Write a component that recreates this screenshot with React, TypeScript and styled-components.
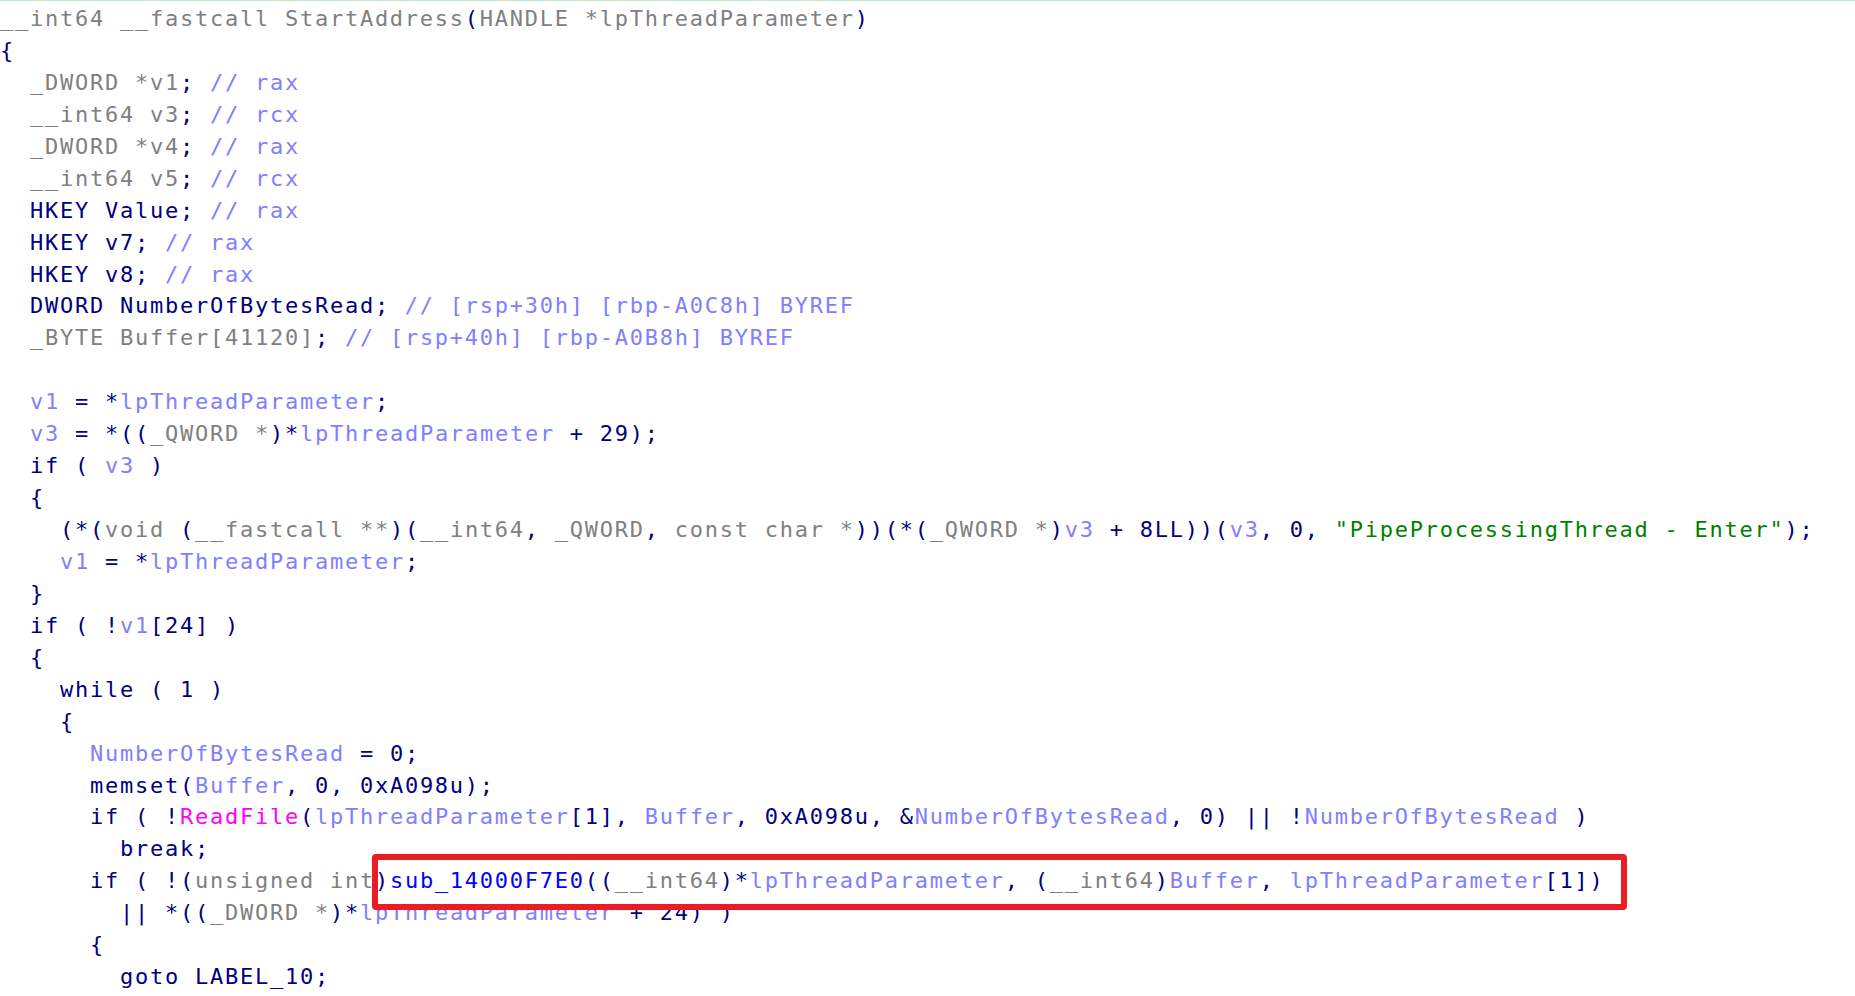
import React from "react";
import styled, { createGlobalStyle } from "styled-components";

type Kind = "n" | "g" | "v" | "s" | "m" | "f";

const colors: Record<Kind, string> = {
  n: "#000080", // keywords, punctuation, numbers
  g: "#808080", // types
  v: "#8080ff", // variables and comments
  s: "#008000", // strings
  m: "#ff00ff", // imports
  f: "#0000ff", // functions
};

// each line: segments split by "§", first char of a segment is its kind
const source: string[] = [
  "g__int64 __fastcall StartAddress§n(§gHANDLE *lpThreadParameter§n)",
  "n{",
  "g  _DWORD *v1§n;§v // rax",
  "g  __int64 v3§n;§v // rcx",
  "g  _DWORD *v4§n;§v // rax",
  "g  __int64 v5§n;§v // rcx",
  "n  HKEY Value;§v // rax",
  "n  HKEY v7;§v // rax",
  "n  HKEY v8;§v // rax",
  "n  DWORD NumberOfBytesRead;§v // [rsp+30h] [rbp-A0C8h] BYREF",
  "g  _BYTE Buffer[41120]§n;§v // [rsp+40h] [rbp-A0B8h] BYREF",
  "n ",
  "n  §vv1§n = *§vlpThreadParameter§n;",
  "n  §vv3§n = *((§g_QWORD *§n)*§vlpThreadParameter§n + 29);",
  "n  if ( §vv3§n )",
  "n  {",
  'n    (*(§gvoid §n(§g__fastcall **§n)(§g__int64§n, §g_QWORD§n, §gconst char *§n))(*(§g_QWORD *§n)§vv3§n + 8LL))(§vv3§n, 0, §s"PipeProcessingThread - Enter"§n);',
  "n    §vv1§n = *§vlpThreadParameter§n;",
  "n  }",
  "n  if ( !§vv1§n[24] )",
  "n  {",
  "n    while ( 1 )",
  "n    {",
  "n      §vNumberOfBytesRead§n = 0;",
  "n      memset(§vBuffer§n, 0, 0xA098u);",
  "n      if ( !§mReadFile§n(§vlpThreadParameter§n[1], §vBuffer§n, 0xA098u, &§vNumberOfBytesRead§n, 0) || !§vNumberOfBytesRead§n )",
  "n        break;",
  "n      if ( !(§gunsigned int§n)§fsub_14000F7E0§n((§g__int64§n)*§vlpThreadParameter§n, (§g__int64§n)§vBuffer§n, §vlpThreadParameter§n[1])",
  "n        || *((§g_DWORD *§n)*§vlpThreadParameter§n + 24) )",
  "n      {",
  "n        goto LABEL_10;",
];

const lines = source.map((l) =>
  l.split("§").map((seg) => ({ kind: seg[0] as Kind, text: seg.slice(1) }))
);

const GlobalStyle = createGlobalStyle`
  html, body {
    margin: 0;
    padding: 0;
    background: #ffffff;
  }
  body {
    overflow: hidden;
  }
`;

const CodeView = styled.div`
  position: relative;
  box-sizing: border-box;
  width: 1855px;
  height: 996px;
  border-top: 1px solid #c8e6c8;
  padding: 2px 0 0 0;
  background: #ffffff;
  font-family: "DejaVu Sans Mono", "Liberation Mono", monospace;
  font-size: 22px;
  letter-spacing: 1.75px;
  line-height: 31.94px;
  overflow: hidden;
`;

const Line = styled.div`
  white-space: pre;
  height: 31.94px;
`;

const Token = styled.span<{ $kind: Kind }>`
  color: ${(p) => colors[p.$kind]};
`;

const Highlight = styled.div`
  position: absolute;
  left: 372px;
  top: 853px;
  width: 1255px;
  height: 56px;
  box-sizing: border-box;
  border: 6px solid #ec1c24;
  border-radius: 4px;
  pointer-events: none;
`;

export default function App() {
  return (
    <>
      <GlobalStyle />
      <CodeView>
        {lines.map((segs, i) => (
          <Line key={i}>
            {segs.map((s, j) => (
              <Token key={j} $kind={s.kind}>
                {s.text}
              </Token>
            ))}
          </Line>
        ))}
        <Highlight />
      </CodeView>
    </>
  );
}
